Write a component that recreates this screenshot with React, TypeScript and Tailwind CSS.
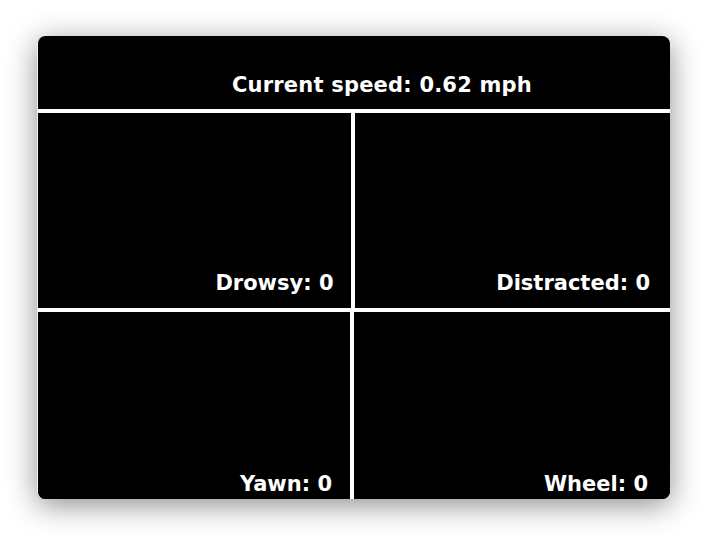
import React from "react";

const font = { fontFamily: '"DejaVu Sans", "Liberation Sans", sans-serif' };

function Cell({ label, className }: { label: string; className: string }) {
  return (
    <div className={`flex-1 flex items-end justify-end bg-black ${className}`}>
      <span className="text-white font-bold text-[21px] leading-none whitespace-nowrap" style={font}>
        {label}
      </span>
    </div>
  );
}

export default function App() {
  return (
    <div className="w-[706px] h-[536px] bg-white pl-[37px] pt-[36px]">
      <div className="w-[633px] h-[463px] rounded-[8px] overflow-hidden bg-black flex flex-col border-l border-[#f2f2f2] shadow-[0_6px_30px_rgba(0,0,0,0.45)]">
        <div className="h-[73px] pt-[38px] pl-[194px]">
          <span className="text-white font-bold text-[21px] leading-none whitespace-nowrap tracking-[0.2px]" style={font}>
            Current speed: 0.62 mph
          </span>
        </div>
        <div className="h-[4px] bg-white" />
        <div className="h-[195px] flex">
          <Cell label="Drowsy: 0" className="pr-[17px] pb-[14px]" />
          <div className="w-[4px] bg-white" />
          <Cell label="Distracted: 0" className="pr-[20px] pb-[14px]" />
        </div>
        <div className="h-[4px] bg-white" />
        <div className="flex-1 flex">
          <Cell label="Yawn: 0" className="pr-[18px] pb-[4px]" />
          <div className="w-[4px] bg-white" />
          <Cell label="Wheel: 0" className="pr-[22px] pb-[4px]" />
        </div>
      </div>
    </div>
  );
}
